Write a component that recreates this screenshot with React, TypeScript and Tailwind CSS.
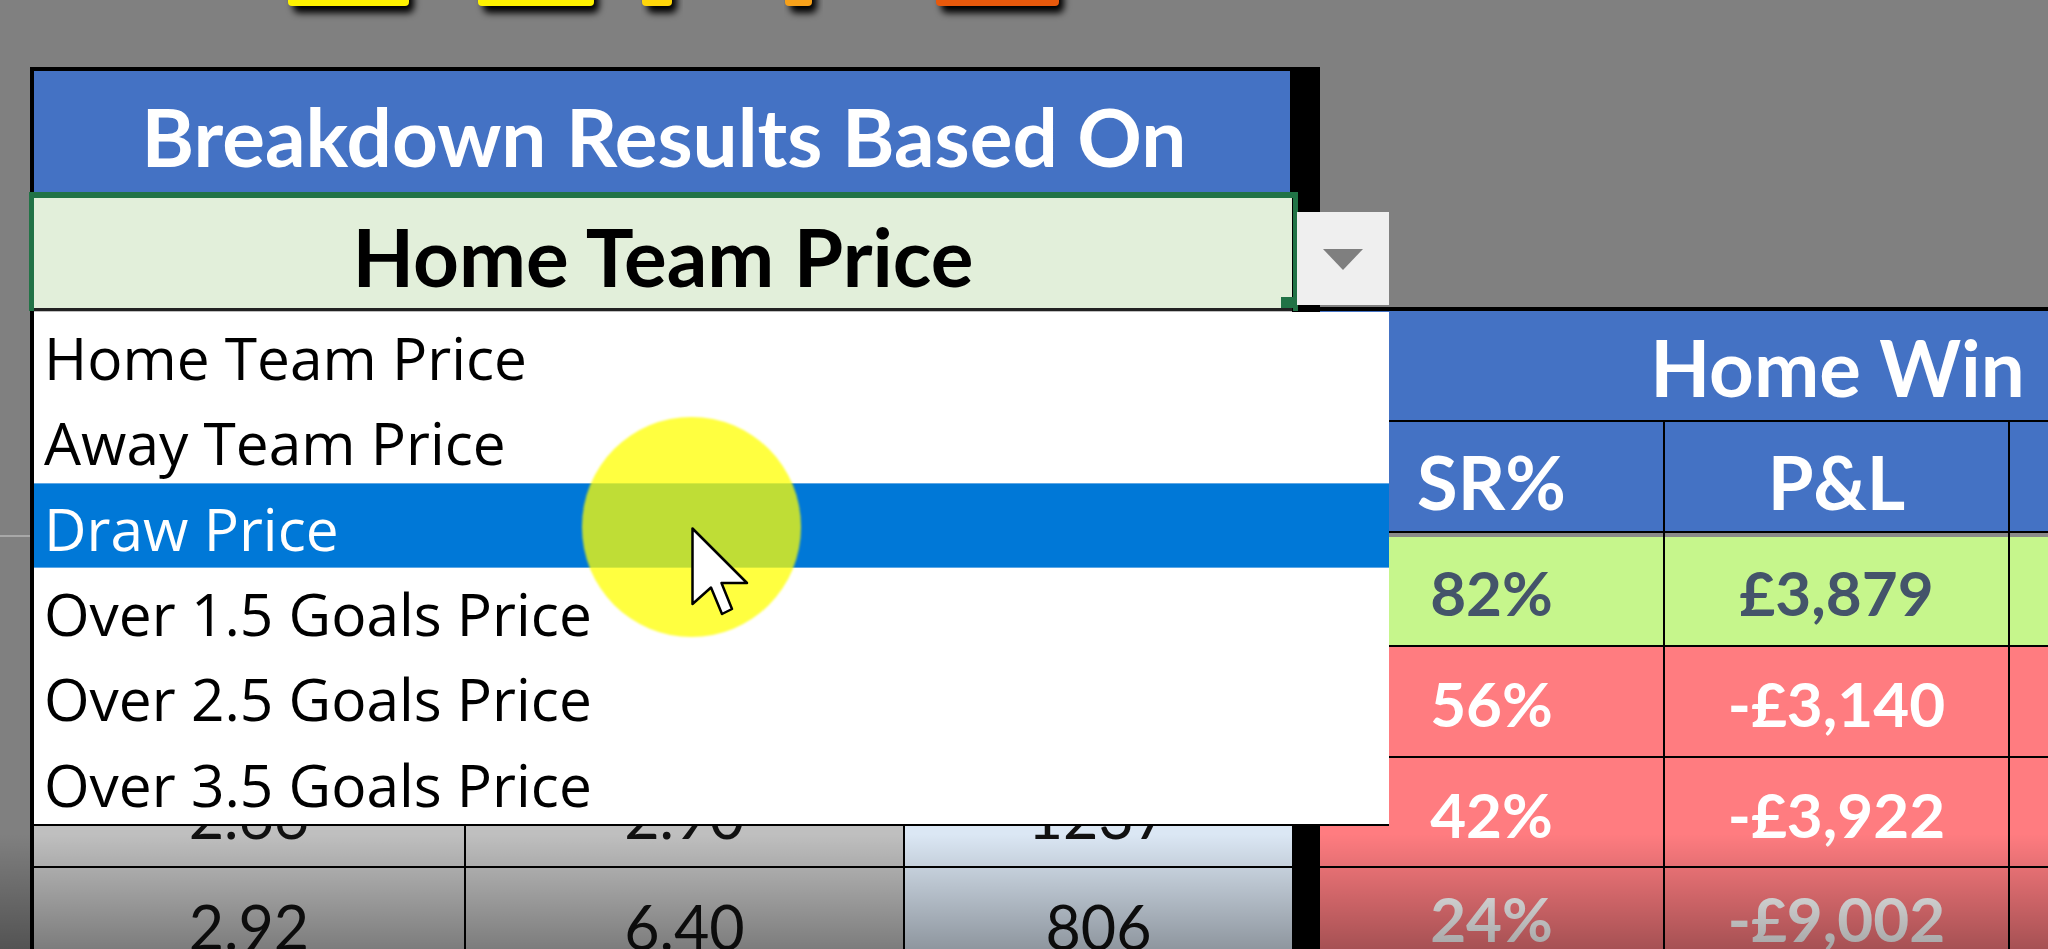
const calibri = "font-['Lato','Liberation_Sans',sans-serif]"

const options = [
  'Home Team Price',
  'Away Team Price',
  'Draw Price',
  'Over 1.5 Goals Price',
  'Over 2.5 Goals Price',
  'Over 3.5 Goals Price',
]

const resultRows = [
  { sr: '56%', pl: '-£3,140', h: 'h-[111px]' },
  { sr: '42%', pl: '-£3,922', h: 'h-[110px]' },
  { sr: '24%', pl: '-£9,002', h: 'h-[90px]' },
]

function LogoStrip() {
  const bars = [
    { x: 288, w: 121, c: '#fff200' },
    { x: 478, w: 116, c: '#fff200' },
    { x: 642, w: 30, c: '#ffd60a' },
    { x: 785, w: 27, c: '#f7a11a' },
    { x: 936, w: 123, c: '#e8590c' },
  ]
  return (
    <svg className="block w-[2048px] h-[67px]" viewBox="0 0 2048 67">
      <defs>
        <filter id="logoBlur" x="-20%" y="-50%" width="140%" height="250%">
          <feGaussianBlur stdDeviation="3.5" />
        </filter>
      </defs>
      {bars.map((b) => (
        <g key={b.x}>
          <rect x={b.x + 5} y={-10} width={b.w} height={23} rx={6} fill="#000" filter="url(#logoBlur)" />
          <rect x={b.x} y={-10} width={b.w} height={16} rx={4} fill={b.c} />
        </g>
      ))}
    </svg>
  )
}

function LeftRow({ a, b, c, tall }: { a: string; b: string; c: string; tall?: boolean }) {
  return (
    <div className={`grid grid-cols-[432px_439px_387px] ${tall ? 'h-[90px]' : 'h-[110px]'} border-b-2 border-black text-[61px] text-[#111] ${calibri}`}>
      <div className={`flex justify-center border-r-2 border-black bg-[#bfbfbf] ${tall ? 'pt-[13px]' : 'items-center pt-[8px]'}`}>{a}</div>
      <div className={`flex justify-center border-r-2 border-black bg-[#bfbfbf] ${tall ? 'pt-[13px]' : 'items-center pt-[8px]'}`}>{b}</div>
      <div className={`flex justify-center bg-[#dbe7f4] ${tall ? 'pt-[13px]' : 'items-center pt-[8px]'}`}>{c}</div>
    </div>
  )
}

function LeftPanel() {
  return (
    <section className="w-[1290px] flex-none bg-black pt-[4px] pl-[4px] pr-[28px]">
      <div className={`flex h-[121px] mr-[2px] items-center justify-center bg-[#4472c4] pl-[4px] pt-[8px] text-[80px] font-bold text-white ${calibri}`}>
        Breakdown Results Based On
      </div>
      <div className={`relative flex h-[119px] items-center justify-center bg-[#e2efda] pt-[8px] text-[80px] font-bold text-black ${calibri}`}>
        Home Team Price
        <div className="absolute -left-[5px] top-0 -right-[6px] bottom-0 border-[5px] border-b-0 border-t-[6px] border-[#217346]" />
        <div className="absolute inset-x-0 bottom-0 h-[3px] bg-[#222]" />
        <div className="absolute right-[-3px] bottom-[3px] h-[11px] w-[14px] bg-[#217346]" />
      </div>
      <div className="h-[447px] bg-[#bfbfbf]" />
      <LeftRow a="2.66" b="2.90" c="1237" />
      <LeftRow a="2.92" b="6.40" c="806" tall />
    </section>
  )
}

function ResultsPanel() {
  return (
    <section className={`mt-[240px] w-[1035px] flex-none border-t-4 border-black font-bold ${calibri}`}>
      <div className="flex h-[111px] items-center justify-center border-b-2 border-black bg-[#4472c4] pt-[4px] text-[78px] text-white">
        Home Win
      </div>
      <div className="grid h-[111px] grid-cols-3 border-b-2 border-black bg-[#4472c4] text-[74px] text-white">
        <div className="flex items-center justify-center border-r-2 border-black pt-[4px]">SR%</div>
        <div className="flex items-center justify-center border-r-2 border-black pt-[4px]">P&amp;L</div>
        <div />
      </div>
      <div className="h-[4px] bg-[#8a8a8a]" />
      <div className="grid h-[110px] grid-cols-3 border-b-2 border-black bg-[#c6f68c] text-[62px] text-[#44546a]">
        <div className="flex items-center justify-center border-r-2 border-black pt-[2px]">82%</div>
        <div className="flex items-center justify-center border-r-2 border-black pt-[2px]">£3,879</div>
        <div />
      </div>
      {resultRows.map((row) => (
        <div key={row.sr} className={`grid ${row.h} grid-cols-3 border-b-2 border-black bg-[#ff7c80] text-[62px] text-white`}>
          <div className="flex items-center justify-center border-r-2 border-black pt-[4px]">{row.sr}</div>
          <div className="flex items-center justify-center border-r-2 border-black pt-[4px]">{row.pl}</div>
          <div />
        </div>
      ))}
    </section>
  )
}

function DropdownList() {
  return (
    <div className="absolute left-[34px] top-[312px] z-10 h-[514px] w-[1355px] border-b-2 border-black bg-white font-['Open_Sans','Noto_Sans',sans-serif] text-[58.6px] text-black">
      {options.map((o) => (
        <div
          key={o}
          className={`flex h-[85.4px] items-center pl-[10px] pt-[6px] ${o === 'Draw Price' ? 'border-y border-[#5ea8e6] bg-[#0078d7] text-white' : ''}`}
        >
          {o}
        </div>
      ))}
    </div>
  )
}

function DropdownButton() {
  return (
    <div className="absolute left-[1297px] top-[212px] z-10 flex h-[93px] w-[92px] items-start justify-center bg-[#efefef] pt-[37px]">
      <svg width="40" height="21" viewBox="0 0 40 21">
        <path d="M0 0H40L20 21Z" fill="#7f7f7f" />
      </svg>
    </div>
  )
}

function MouseHighlight() {
  return (
    <>
      <div className="absolute left-[582px] top-[417px] z-20 h-[220px] w-[219px] rounded-full bg-[#ffff00]/75 blur-[1px]" />
      <svg className="absolute left-[690px] top-[526px] z-30" width="62" height="92" viewBox="0 0 62 92">
        <path
          d="M2.5 2.5V78L21 61.5L32 88L42 83L31.5 57H57Z"
          fill="#fff"
          stroke="#000"
          strokeWidth="2.5"
          strokeLinejoin="round"
        />
      </svg>
    </>
  )
}

export default function App() {
  return (
    <div className="relative h-[949px] w-[2048px] overflow-hidden bg-[#808080]">
      <LogoStrip />
      <div className="flex pl-[30px]">
        <LeftPanel />
        <ResultsPanel />
      </div>
      <DropdownButton />
      <DropdownList />
      <MouseHighlight />
      <div className="absolute left-0 top-[535px] h-[2px] w-[30px] bg-[#a8a8a8]" />
      {/* video fade along the bottom edge */}
      <div className="pointer-events-none absolute inset-x-0 bottom-0 z-40 h-[115px] bg-gradient-to-b from-black/0 to-black/35" />
    </div>
  )
}
